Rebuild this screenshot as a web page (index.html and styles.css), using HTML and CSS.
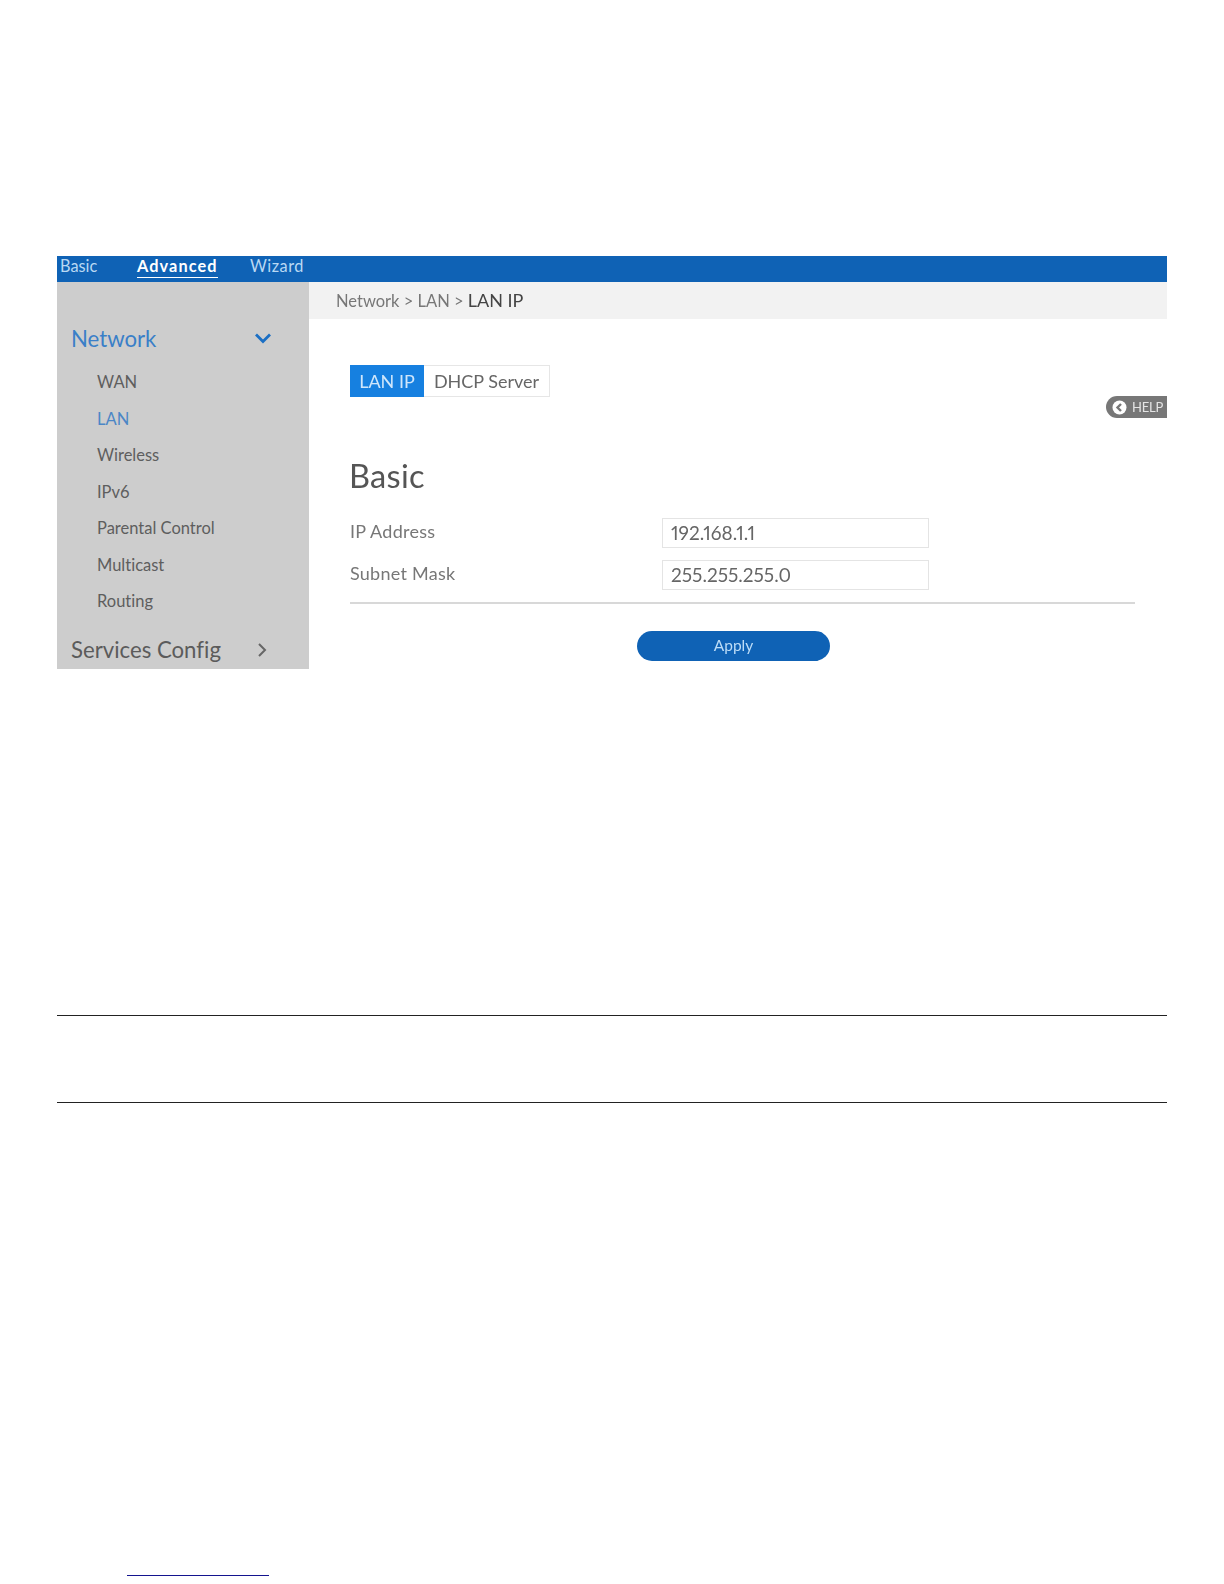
FILE: index.html
```html
<!DOCTYPE html>
<html lang="en">
<head>
<meta charset="utf-8">
<title>LAN IP</title>
<link rel="stylesheet" href="styles.css">
</head>
<body>
<div class="shot">
  <nav class="topbar">
    <a class="top-link top-basic">Basic</a>
    <a class="top-link top-active"><span class="top-active-text">Advanced</span></a>
    <a class="top-link top-wizard">Wizard</a>
  </nav>
  <div class="panes">
    <aside class="sidebar">
      <div class="group group-open">
        <span>Network</span>
        <svg class="chev" width="18" height="12" viewBox="0 0 18 12"><path d="M2 2.5l7 7 7-7" fill="none" stroke="#1b6fc4" stroke-width="2.8"/></svg>
      </div>
      <ul class="items">
        <li>WAN</li>
        <li class="item-active">LAN</li>
        <li>Wireless</li>
        <li>IPv6</li>
        <li>Parental Control</li>
        <li>Multicast</li>
        <li>Routing</li>
      </ul>
      <div class="group group-closed">
        <span>Services Config</span>
        <svg class="chev-r" width="12" height="16" viewBox="0 0 12 16"><path d="M3 2l6 6-6 6" fill="none" stroke="#666" stroke-width="2"/></svg>
      </div>
    </aside>
    <main class="content">
      <div class="crumbs">Network &gt; LAN &gt; <span class="crumb-now">LAN IP</span></div>
      <div class="body">
        <div class="tabs">
          <span class="tab tab-on">LAN IP</span>
          <span class="tab tab-off">DHCP Server</span>
        </div>
        <h1 class="title">Basic</h1>
        <div class="row row-first">
          <label class="label">IP Address</label>
          <div class="field">192.168.1.1</div>
        </div>
        <div class="row">
          <label class="label">Subnet Mask</label>
          <div class="field">255.255.255.0</div>
        </div>
        <hr class="divider">
        <div class="actions"><button class="apply">Apply</button></div>
      </div>
      <div class="help">
        <svg width="15" height="15" viewBox="0 0 15 15"><circle cx="7.5" cy="7.5" r="7" fill="#fff"/><path d="M9 4L5.5 7.5 9 11" fill="none" stroke="#777" stroke-width="2.4"/></svg>
        <span>HELP</span>
      </div>
    </main>
  </div>
</div>
<div class="rule rule-a"></div>
<div class="rule rule-b"></div>
<div class="link-line"></div>
</body>
</html>
```
FILE: styles.css
```css
* { box-sizing: border-box; }
html, body { margin: 0; padding: 0; background: #fff; }
body { height: 1584px; overflow: hidden; padding: 256px 57px 0; font-family: Lato, "Noto Sans", sans-serif; font-variant-ligatures: none; }

.shot { width: 1110px; height: 413px; display: flex; flex-direction: column; filter: blur(0.6px); }

.topbar { height: 26px; background: #0f62b5; display: flex; align-items: flex-start; padding: 0 0 0 3px; font-size: 16.3px; line-height: 20px; color: #b9d8f3; flex: none; }
.top-link { display: block; }
.top-basic { width: 77px; }
.top-active { width: 113px; color: #fff; font-weight: 700; letter-spacing: 1.1px; }
.top-active-text { display: inline-block; height: 22px; border-bottom: 1px solid #fff; }
.top-wizard { letter-spacing: .5px; }

.panes { flex: 1; display: flex; min-height: 0; }

.sidebar { width: 252px; flex: none; background: #cdcdcd; padding-top: 38px; overflow: hidden; }
.group { display: flex; align-items: center; justify-content: space-between; height: 36px; padding: 0 38px 0 14px; font-size: 22.2px; }
.group-open { color: #3a7fc8; padding-right: 37px; }
.group-closed { color: #5b5b5b; margin-top: 12px; padding-right: 41px; }
.items { list-style: none; margin: 8px 0 0; padding: 0 0 0 40px; font-size: 16.5px; color: #5e5e5e; }
.items li { height: 36.5px; line-height: 36.5px; }
.item-active { color: #4b86c6; }

.content { flex: 1; position: relative; min-width: 0; }
.crumbs { height: 37px; background: #f2f2f2; padding-left: 27px; line-height: 36px; font-size: 16.5px; color: #777; }
.crumb-now { color: #444; font-size: 18px; }

.body { padding: 46px 32px 0 41px; }
.tabs { display: flex; height: 32px; width: 200px; }
.tab { display: flex; align-items: center; justify-content: center; font-size: 18px; }
.tab-on { width: 74px; background: #1680e0; color: #cfe6fb; }
.tab-off { flex: 1; border: 1px solid #e6e6e6; border-left: 0; color: #666; }

.title { margin: 57px 0 0 -1px; height: 44px; line-height: 44px; font-size: 32.6px; font-weight: 400; color: #555; letter-spacing: .3px; }

.row { display: flex; height: 30px; align-items: center; margin-top: 12px; }
.row-first { margin-top: 20px; }
.label { width: 312px; font-size: 18px; color: #777; padding-bottom: 4px; letter-spacing: .25px; }
.field { width: 267px; height: 30px; border: 1px solid #e4e4e4; padding-left: 8px; line-height: 28px; font-size: 19px; color: #666; font-variant-numeric: proportional-nums; font-feature-settings: "pnum" 1; }

.divider { margin: 12px 0 0; border: 0; height: 2px; background: #d8d8d8; }

.actions { padding: 27px 0 0 287px; }
.apply { display: block; width: 193px; height: 30px; padding: 0 0 2px; border: 0; border-radius: 15px; background: #0f62b5; color: #bcdcf7; font: 15.5px Lato, "Noto Sans", sans-serif; }

.help { position: absolute; right: 0; top: 114px; width: 61px; height: 22px; background: #777; border-radius: 11px 0 0 11px; display: flex; align-items: center; gap: 5px; padding-left: 6px; color: #e4e4e4; font-size: 13px; letter-spacing: -.2px; }

.rule { height: 1px; width: 1110px; background: #222; }
.rule-a { margin-top: 346px; }
.rule-b { margin-top: 86px; }
.link-line { width: 142px; height: 1px; background: #14148f; margin: 472px 0 0 70px; }
```
